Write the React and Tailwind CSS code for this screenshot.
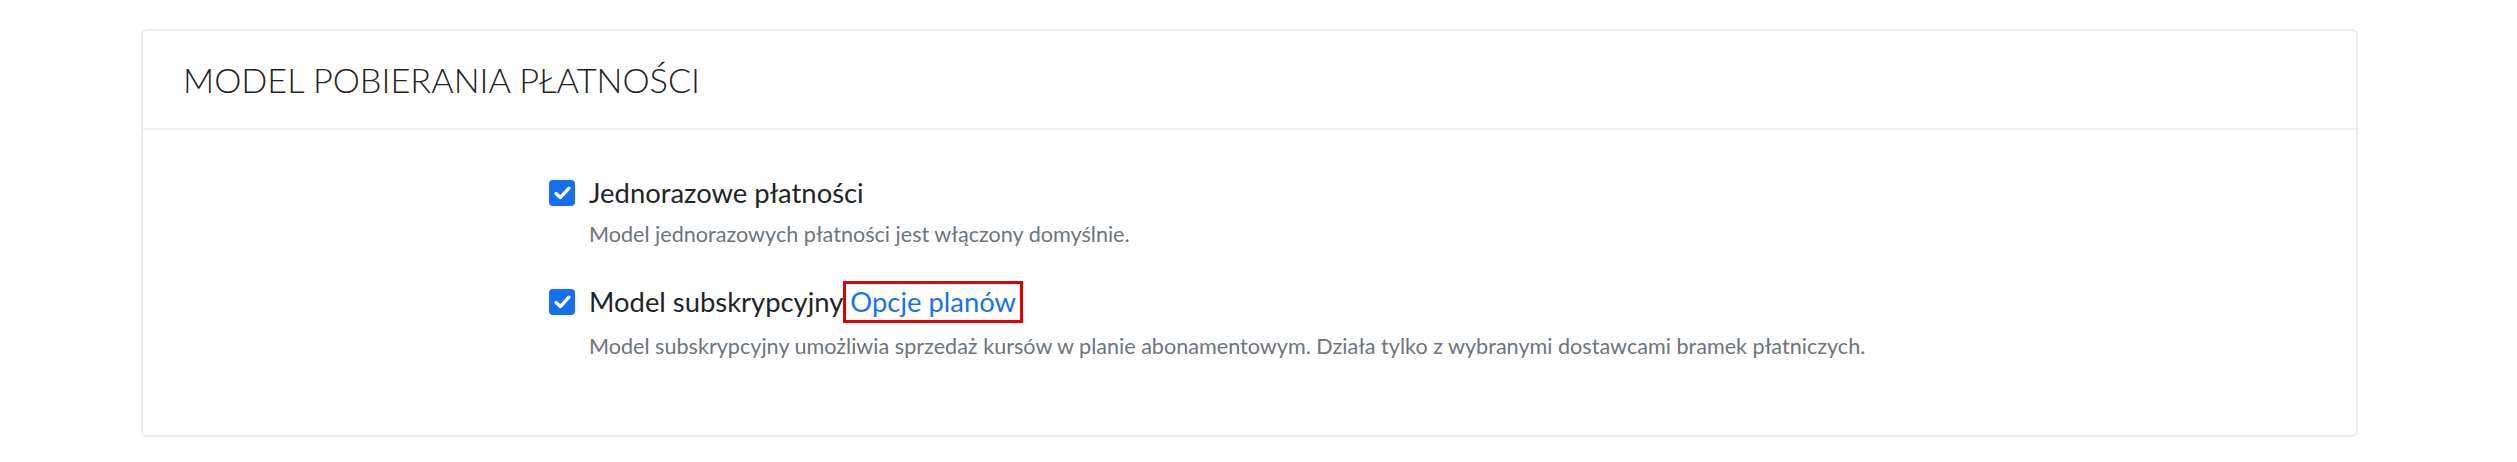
import React from "react";

const CheckBox = () => (
  <span className="flex items-center justify-center w-[26px] h-[26px] rounded-[4px] bg-[#1570ef] shrink-0">
    <svg width="17" height="14" viewBox="0 0 15 12" fill="none">
      <path d="M1.8 6.4 L5.6 10 L13.2 1.8" stroke="white" strokeWidth="2.9" strokeLinecap="round" strokeLinejoin="round" />
    </svg>
  </span>
);

const Option = ({ label, extra, description, className }) => (
  <div className={className}>
    <div className="flex items-center">
      <CheckBox />
      <span className="ml-[14px] text-[27.4px] leading-[36px] text-[#212529]">{label}</span>
      {extra}
    </div>
    <p className="pl-[40px] mt-[7px] text-[21.6px] leading-[32px] text-[#6c757d]">{description}</p>
  </div>
);

export default function App() {
  return (
    <div className="min-h-[462px] bg-white pt-[29px] font-['Lato','Liberation_Sans',sans-serif]">
      <div className="ml-[141px] w-[2217px] h-[408px] border-2 border-[#ececec] rounded-[6px] bg-white">
        <div className="h-[99px] flex items-center px-[40px] border-b-2 border-[#f0f0f0]">
          <h2 className="text-[34.3px] font-light text-[#222]">MODEL POBIERANIA PŁATNOŚCI</h2>
        </div>
        <div className="pl-[406px] pt-[45px]">
          <Option
            label="Jednorazowe płatności"
            description="Model jednorazowych płatności jest włączony domyślnie."
          />
          <Option
            className="mt-[31px]"
            label="Model subskrypcyjny"
            extra={
              <a className="inline-block border-[3px] border-[#e30000] px-[4px] text-[27.4px] leading-[36px] text-[#1a73e8]">
                Opcje planów
              </a>
            }
            description="Model subskrypcyjny umożliwia sprzedaż kursów w planie abonamentowym. Działa tylko z wybranymi dostawcami bramek płatniczych."
          />
        </div>
      </div>
    </div>
  );
}
